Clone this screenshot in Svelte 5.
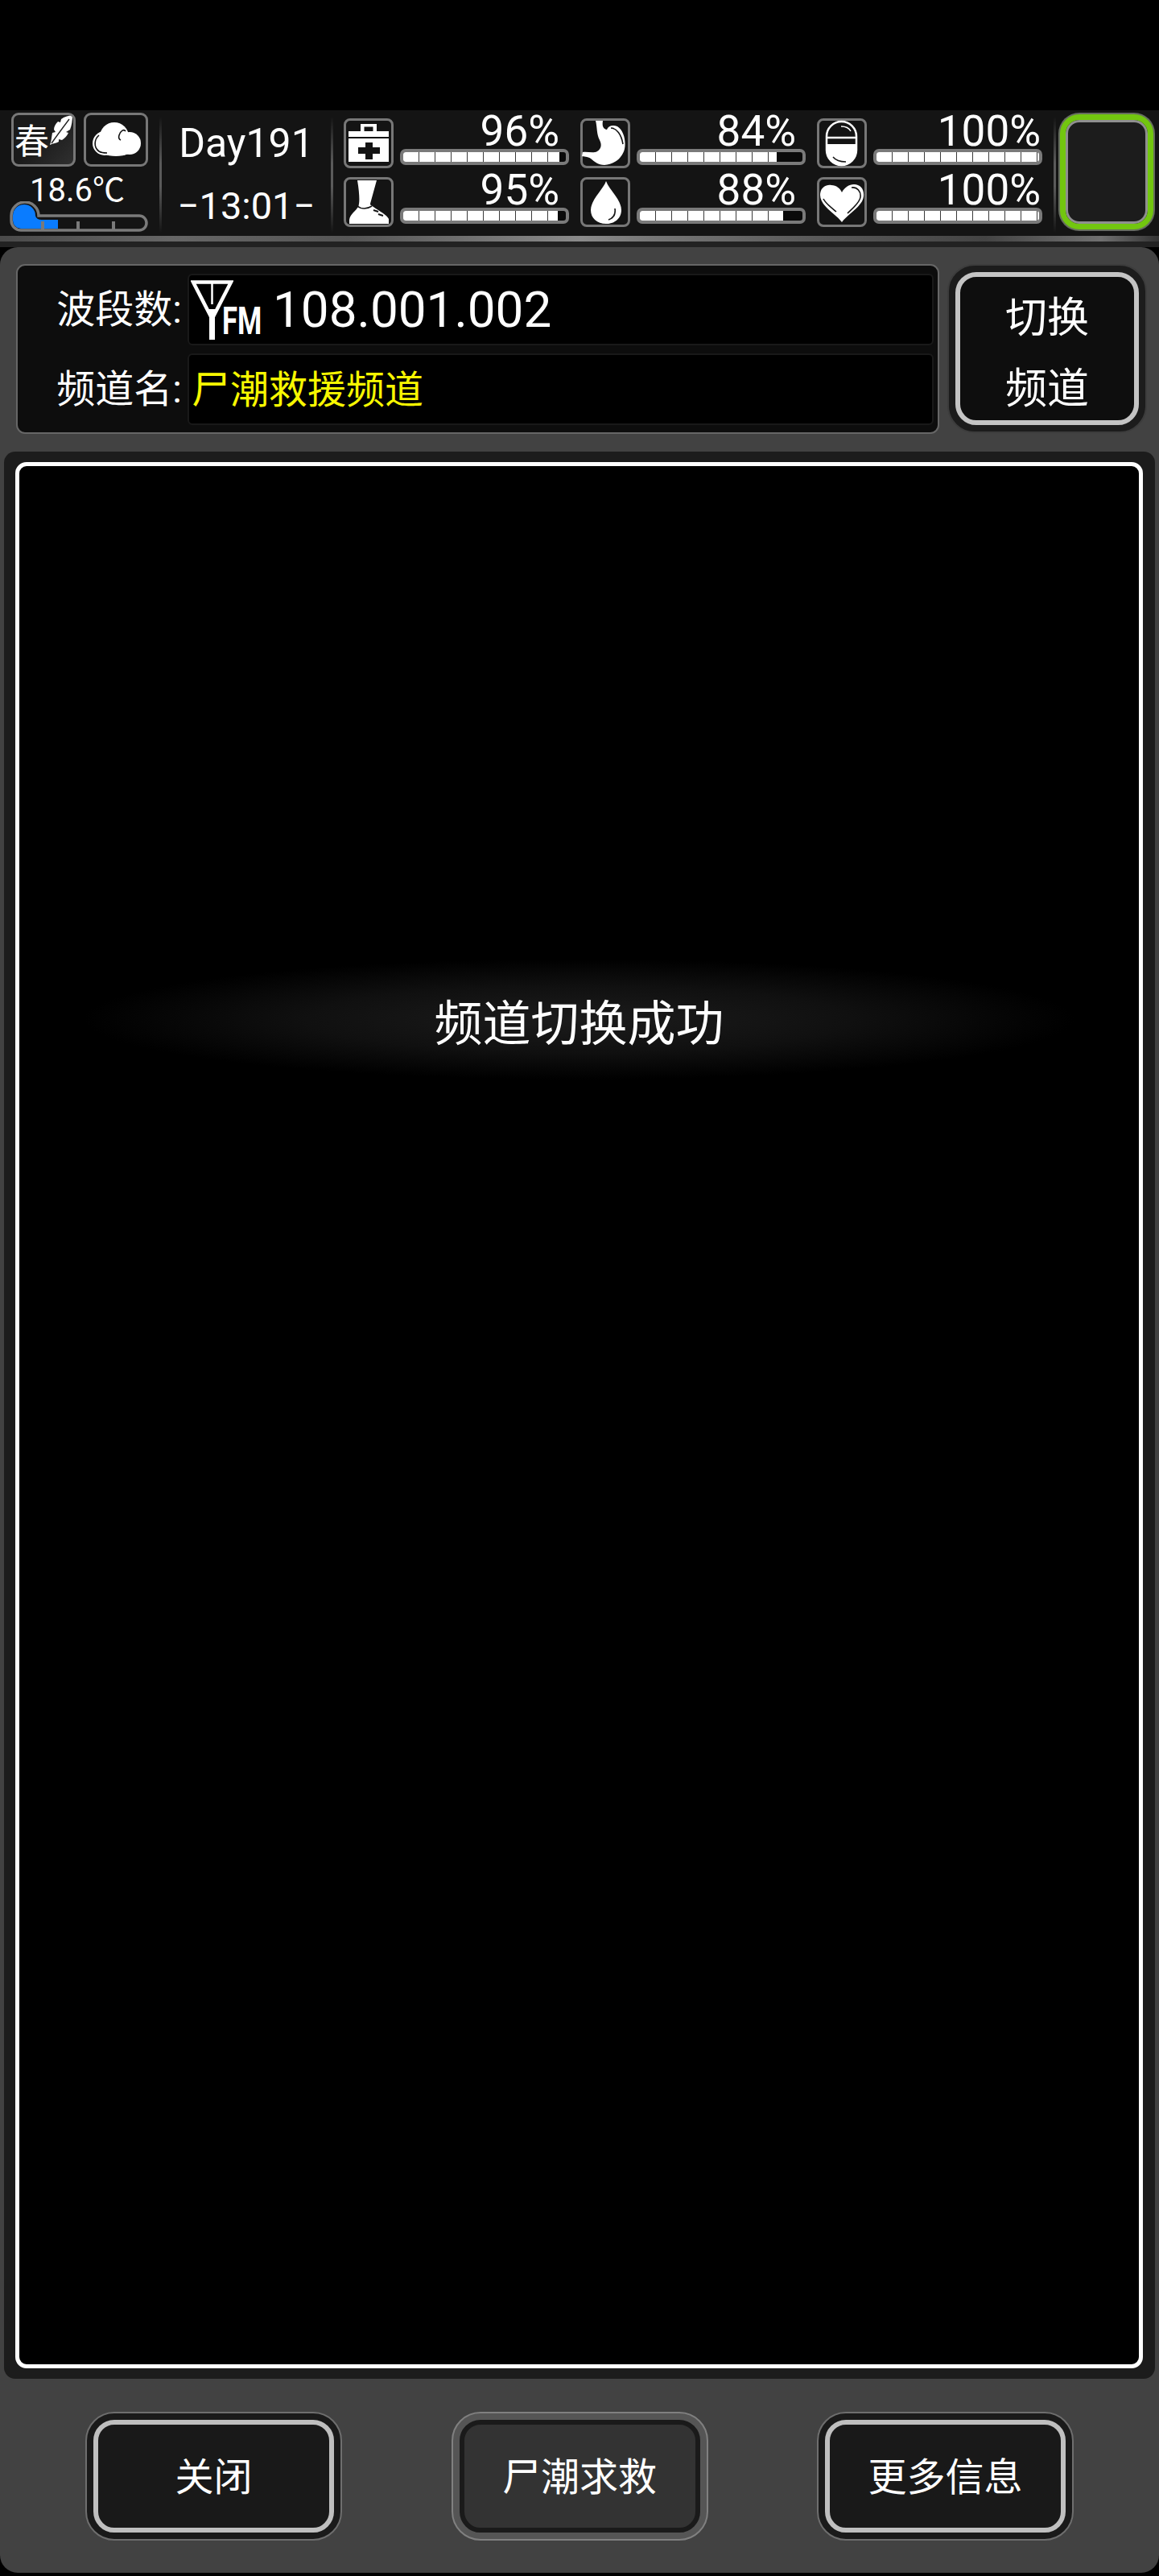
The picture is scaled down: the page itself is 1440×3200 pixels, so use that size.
<script>
    const stats = [
        { id: 'health', value: 96 },
        { id: 'foot', value: 95 },
        { id: 'stomach', value: 84 },
        { id: 'water', value: 88 },
        { id: 'pill', value: 100 },
        { id: 'heart', value: 100 }
    ];
    const actions = [
        { label: '关闭' },
        { label: '尸潮求救', muted: true },
        { label: '更多信息' }
    ];
</script>

<div class="screen">
    <header class="status">
        <div class="weather">
            <div class="boxes">
                <div class="tile season">
                    <span>春</span>
                    <svg class="feather" viewBox="0 0 30 40">
                        <path fill="#fff" d="M29 1C23 2 19 3 15 6L14 10L11 9C8 12 6 15 6 19L8 22L4 23C3 28 3 33 1 38C5 36 9 36 12 34L12 31L16 32C20 29 22 27 24 23L21 22L26 19C28 14 29 8 29 1Z"/>
                        <path fill="none" stroke="#222" stroke-width="1.4" d="M25 6C19 14 10 26 3 36"/>
                    </svg>
                </div>
                <div class="tile">
                    <svg viewBox="0 0 80 67" width="80" height="67">
                        <circle cx="26" cy="38" r="15" fill="#fff"/>
                        <circle cx="38" cy="30" r="18" fill="#fff"/>
                        <circle cx="57" cy="38" r="14" fill="#fff"/>
                        <ellipse cx="40" cy="44" rx="22" ry="10" fill="#fff"/>
                        <path fill="none" stroke="#111" stroke-width="1.6" d="M19 28C13 33 12 43 19 48C22 50 25 50 29 50M44 28C46 22 50 20 52 23M44 28C43 31 44 33 46 34"/>
                    </svg>
                </div>
            </div>
            <div class="temp">18.6℃</div>
            <svg class="thermo" viewBox="0 0 172 38" width="172" height="38">
                <path fill="#0a7cff" d="M4 18a14 14 0 0 1 28 0q1 5 8 5H60V34H14a10 10 0 0 1-10-10Z"/>
                <path fill="none" stroke="#7a7a7a" stroke-width="3.5" d="M36 18H161a9 9 0 0 1 0 18H14a12 12 0 0 1-12-12V18a17 17 0 0 1 34 0Z"/>
                <path stroke="#7a7a7a" stroke-width="4" d="M41 25V36M85 25V36M129 25V36"/>
            </svg>
        </div>
        <div class="sep"></div>
        <div class="clock">
            <div class="day">Day191</div>
            <div class="time">−13:01−</div>
        </div>
        <div class="sep"></div>
        <div class="stats">
            {#each stats as stat}
                <div class="stat">
                    <div class="icon">
                        <svg viewBox="0 0 62 62" width="62" height="62">
                            {#if stat.id === 'health'}
                                <path fill="#fff" fill-rule="evenodd" d="M21 7H41V16H56V23H6V16H21ZM25.500 10.500V16H36.500V10.500Z"/>
                                <path fill="#fff" d="M6 25H56V54H6Z"/>
                                <path fill="#141414" d="M27 30H36V36H45V44H36V51H27V44H18V36H27Z"/>
                            {:else if stat.id === 'foot'}
                                <path fill="#fff" d="M17 4H41L33 33C33 35 34 35 37 37C44 42 54 47 56 52V58H7V53C8 46 15 42 18 37C20 33 20 22 17 4Z"/>
                                <path fill="none" stroke="#141414" stroke-width="1.600" d="M17 36C22 40 29 40 35 36"/>
                                <path fill="none" stroke="#141414" stroke-width="2" d="M37 41L43 43M43 46L49 48"/>
                            {:else if stat.id === 'stomach'}
                                <path fill="#fff" d="M19 3H28C27 9 28 13 33 14C35 9 40 8 46 10C54 15 57 28 55 38C52 50 42 57 30 58C22 58 18 54 13 50C9 47 4 48 2 47L3 42C9 41 16 44 21 41C26 38 27 33 24 27C20 20 21 10 19 3Z"/>
                                <path fill="none" stroke="#141414" stroke-width="1.600" d="M38 12C45 12 51 20 53 32"/>
                            {:else if stat.id === 'water'}
                                <path fill="#fff" d="M32 5C28 16 13 28 13 41C13 51 21 58 32 58C43 58 51 51 51 41C51 28 36 16 32 5Z"/>
                                <path fill="none" stroke="#141414" stroke-width="1.600" d="M43 39C44 46 41 51 35 53"/>
                            {:else if stat.id === 'pill'}
                                <rect x="12" y="4" width="37" height="54" rx="18.500" fill="none" stroke="#fff" stroke-width="2.500"/>
                                <path fill="#fff" d="M12 32H49V40A18.500 18.500 0 0 1 12 40Z"/>
                                <path stroke="#fff" stroke-width="2.500" d="M12 24H49"/>
                                <path fill="none" stroke="#fff" stroke-width="1.500" d="M30 10C36 10 40 12 42 16"/>
                                <path fill="none" stroke="#141414" stroke-width="1.500" d="M20 48C24 53 30 54 36 54"/>
                            {:else}
                                <path fill="#fff" d="M31 56C24 46 3 36 4 21C5 12 12 9 18 10C24 10 29 14 31 19C34 13 40 9 46 9C54 9 59 15 58 24C57 36 38 46 31 56Z"/>
                                <path fill="none" stroke="#141414" stroke-width="1.600" d="M43 13C50 12 55 18 54 25C53 32 44 39 38 45M8 27C11 33 18 38 24 43"/>
                            {/if}
                        </svg>
                    </div>
                    <div class="meter">
                        <div class="value {stat.value === 100 ? 'full' : ''}">{stat.value}%</div>
                        <div class="bar">
                            <div class="fill" style="width: {stat.value}%"></div>
                        </div>
                    </div>
                </div>
            {/each}
        </div>
        <div class="sep last"></div>
        <div class="slot"></div>
    </header>
    <div class="band"></div>

    <main class="panel">
        <section class="top">
            <div class="info">
                <div class="row">
                    <div class="label">波段数:</div>
                    <div class="field">
                        <svg class="antenna" viewBox="0 0 53 74" width="53" height="74">
                            <path fill="none" stroke="#fff" stroke-width="4.500" d="M3 2.500H50L26.500 48Z"/>
                            <path stroke="#fff" stroke-width="2.500" d="M26.500 2V30"/>
                            <path stroke="#fff" stroke-width="7" d="M26.500 36V74"/>
                        </svg>
                        <span class="fm">FM</span>
                        <span class="freq">108.001.002</span>
                    </div>
                </div>
                <div class="row">
                    <div class="label">频道名:</div>
                    <div class="field">
                        <span class="name">尸潮救援频道</span>
                    </div>
                </div>
            </div>
            <div class="switch">
                <div class="switch-inner">切换<br />频道</div>
            </div>
        </section>

        <section class="frame">
            <div class="log">
                <div class="toast">频道切换成功</div>
            </div>
        </section>

        <footer class="actions">
            {#each actions as action}
                <div class="btn {action.muted ? 'muted' : ''}">
                    <div class="btn-inner">{action.label}</div>
                </div>
            {/each}
        </footer>
    </main>
</div>

<style>
    :global(body) {
        background: #000;
    }

    .screen {
        width: 1440px;
        height: 3200px;
        padding-top: 137px;
        box-sizing: border-box;
        background: #000;
        color: #fff;
        font-family: Roboto, "Noto Sans CJK SC", sans-serif;
        overflow: hidden;
    }

    /* status bar */
    .status {
        height: 156px;
        display: flex;
        background: #141414;
    }

    .weather {
        width: 172px;
        margin-left: 12px;
        margin-right: 14px;
        padding-top: 3px;
    }

    .boxes {
        display: flex;
        gap: 10px;
        margin-left: 2px;
    }

    .tile {
        width: 80px;
        height: 67px;
        box-sizing: border-box;
        border: 3px solid #777;
        border-radius: 9px;
        position: relative;
        overflow: hidden;
    }

    .tile svg {
        display: block;
        margin: -3px;
    }

    .season {
        background: linear-gradient(135deg, #1a1a1a 45%, #303030);
    }

    .season span {
        display: block;
        font-size: 43px;
        line-height: 58px;
        margin-left: 1px;
        font-family: "Noto Sans CJK SC", sans-serif;
    }

    .tile svg.feather {
        position: absolute;
        width: 30px;
        height: 40px;
        right: 0;
        top: -1px;
        margin: 0;
    }

    .temp {
        font-size: 40px;
        line-height: 40px;
        text-align: center;
        margin-top: 10px;
        height: 40px;
        padding-right: 4px;
    }

    .thermo {
        display: block;
        margin-top: -7px;
    }

    .sep {
        width: 3px;
        height: 144px;
        margin-top: 8px;
        flex: none;
        background: linear-gradient(#141414, #5a5a5a 40%, #5a5a5a 60%, #141414);
    }

    .clock {
        width: 210px;
        flex: none;
        text-align: center;
        font-size: 50px;
    }

    .day {
        line-height: 50px;
        margin-top: 16px;
    }

    .time {
        font-size: 47px;
        line-height: 50px;
        margin-top: 28px;
    }

    .stats {
        display: grid;
        grid-template-columns: repeat(3, 294px);
        grid-template-rows: 62px 62px;
        grid-auto-flow: column;
        row-gap: 11px;
        margin-left: 13px;
        margin-top: 10px;
        flex: none;
    }

    .stat {
        display: flex;
        gap: 8px;
    }

    .icon {
        width: 62px;
        height: 62px;
        box-sizing: border-box;
        border: 3px solid #777;
        border-radius: 8px;
    }

    .icon svg {
        display: block;
        margin: -3px;
    }

    .meter {
        width: 210px;
        display: flex;
        flex-direction: column;
        justify-content: flex-end;
        padding-bottom: 4px;
        box-sizing: border-box;
    }

    .value {
        font-size: 53px;
        line-height: 40px;
        text-align: right;
        padding-right: 12px;
        margin-top: -4px;
        margin-bottom: 2px;
    }

    .value.full {
        padding-right: 2px;
    }

    .bar {
        height: 20px;
        box-sizing: border-box;
        border: 4px solid #7a7a7a;
        border-radius: 7px;
        background: #0a0a0a;
        overflow: hidden;
    }

    .fill {
        height: 100%;
        background: repeating-linear-gradient(90deg, #fff 0 19px, #3a3a3a 19px 20px);
    }

    .slot {
        width: 116px;
        height: 143px;
        margin-top: 5px;
        margin-left: 5px;
        box-sizing: border-box;
        border: 7px solid #72c60f;
        border-radius: 24px;
        background: #1c1c1c;
        box-shadow: 0 0 0 2px #666d5f, inset 0 0 0 3px #8f8f8f;
    }

    .band {
        height: 14px;
        background:
            linear-gradient(#0000 50%, #222 50%),
            linear-gradient(90deg, #4a4a4a, #666 15%, #555 30%, #8a8a8a 50%, #777 56%, #5a5a5a 70%, #444 85%, #707070 95%, #333);
    }

    /* panel */
    .panel {
        height: 2889px;
        background: #424242;
        border-radius: 22px;
        overflow: hidden;
    }

    .top {
        display: flex;
        gap: 10px;
        padding: 21px 15px 0 20px;
    }

    .info {
        width: 1147px;
        height: 211px;
        flex: none;
        box-sizing: border-box;
        padding: 10px 5px 9px 0;
        display: flex;
        flex-direction: column;
        gap: 10px;
        background: #0d0d0d;
        border: 2px solid #666;
        border-radius: 11px;
    }

    .row {
        display: flex;
        align-items: stretch;
        height: 89px;
    }

    .label {
        width: 211px;
        flex: none;
        box-sizing: border-box;
        padding-right: 7px;
        text-align: right;
        font-size: 48px;
        line-height: 89px;
        color: #fff;
    }

    .field {
        flex: 1;
        display: flex;
        align-items: center;
        box-sizing: border-box;
        padding-left: 2px;
        background: #000;
        border: 2px solid #191919;
        border-radius: 6px;
    }

    .antenna {
        flex: none;
    }

    .fm {
        width: 49px;
        margin-left: -14px;
        margin-top: 28px;
        font-size: 48px;
        line-height: 50px;
        font-weight: 700;
        white-space: nowrap;
        transform: scaleX(0.72);
        transform-origin: left center;
    }

    .freq {
        margin-left: 14px;
        font-size: 62px;
        line-height: 89px;
    }

    .name {
        font-size: 48px;
        line-height: 85px;
        margin-left: 1px;
        margin-top: 2px;
        color: #f7f700;
    }

    .switch {
        width: 248px;
        height: 210px;
        flex: none;
        box-sizing: border-box;
        padding: 8px;
        background: #1c1c1c;
        border: 2px solid #3c3c3c;
        border-radius: 34px;
    }

    .switch-inner {
        height: 100%;
        box-sizing: border-box;
        border: 6px solid #c4c4c4;
        border-radius: 26px;
        background: #0e0e0e;
        text-align: center;
        font-size: 52px;
        line-height: 88px;
        padding-top: 8px;
    }

    .frame {
        margin: 22px 5px 0;
        height: 2394px;
        box-sizing: border-box;
        padding: 13px 15px 13px 14px;
        background: #1c1c1c;
        border-radius: 14px;
    }

    .log {
        height: 100%;
        box-sizing: border-box;
        position: relative;
        background: #000;
        border: 5px solid #fff;
        border-radius: 14px;
    }

    .toast {
        position: absolute;
        left: 80px;
        right: 80px;
        top: 612px;
        height: 150px;
        display: flex;
        align-items: center;
        justify-content: center;
        font-size: 60px;
        background: radial-gradient(closest-side, #1c1c1c, #101010 55%, #000);
    }

    .actions {
        height: 241px;
        box-sizing: border-box;
        display: flex;
        justify-content: space-between;
        padding: 41px 106px 0;
    }

    .btn {
        width: 319px;
        height: 160px;
        box-sizing: border-box;
        padding: 8px;
        background: #1a1a1a;
        border: 2px solid #6e6e6e;
        border-radius: 36px;
    }

    .btn-inner {
        height: 100%;
        box-sizing: border-box;
        display: flex;
        align-items: center;
        justify-content: center;
        padding-bottom: 6px;
        border: 6px solid #bfbfbf;
        border-radius: 26px;
        background: #191919;
        font-size: 48px;
    }

    .btn.muted {
        background: #555;
        border-color: #808080;
    }

    .btn.muted .btn-inner {
        border-color: #1a1a1a;
        background: #333;
    }
</style>
